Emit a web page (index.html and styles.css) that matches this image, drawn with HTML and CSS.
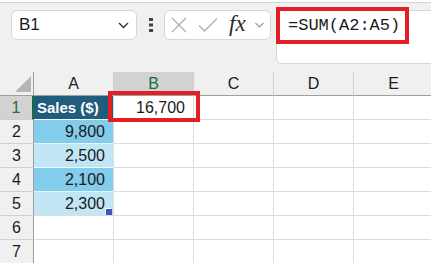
FILE: index.html
```html
<!DOCTYPE html>
<html lang="en">
<head>
    <meta charset="UTF-8">
    <title>Excel SUM</title>
    <link rel="stylesheet" href="styles.css">
</head>
<body>

<div class="top-strip"></div>

<div class="formula-row">
    <div class="name-box">
        <span>B1</span>
        <svg width="11" height="7" viewBox="0 0 11 7"><path d="M1 1 L5.5 5.5 L10 1" fill="none" stroke="#333" stroke-width="1.4"/></svg>
    </div>
    <div class="grip">
        <svg width="4" height="14" viewBox="0 0 4 14"><rect x="0" y="0" width="4" height="3" fill="#444"/><rect x="0" y="5.5" width="4" height="3" fill="#444"/><rect x="0" y="11" width="4" height="3" fill="#444"/></svg>
    </div>
    <div class="fx-box">
        <svg class="icon-x" width="16" height="16" viewBox="0 0 16 16"><path d="M1 1 L15 15 M15 1 L1 15" stroke="#b0b0b0" stroke-width="1.3"/></svg>
        <svg class="icon-check" width="20" height="16" viewBox="0 0 20 16"><path d="M1 8.5 L6.5 14 L19 1.5" fill="none" stroke="#b0b0b0" stroke-width="1.3"/></svg>
        <span class="fx">fx</span>
        <svg width="9" height="6" viewBox="0 0 9 6"><path d="M0.5 1 L4.5 5 L8.5 1" fill="none" stroke="#9a9a9a" stroke-width="1.2"/></svg>
    </div>
    <div class="formula-input">
        <span class="formula-text">=SUM(A2:A5)</span>
    </div>
</div>

<div class="sheet">
    <div class="hdr corner"></div>
    <div class="hdr col">A</div>
    <div class="hdr col selected">B</div>
    <div class="hdr col">C</div>
    <div class="hdr col">D</div>
    <div class="hdr col">E</div>

    <div class="hdr row selected">1</div>
    <div class="cell head">Sales ($)</div>
    <div class="cell num active">16,700<span class="mark"></span></div>
    <div class="cell"></div><div class="cell"></div><div class="cell"></div>

    <div class="hdr row">2</div>
    <div class="cell num dark">9,800</div>
    <div class="cell"></div><div class="cell"></div><div class="cell"></div><div class="cell"></div>

    <div class="hdr row">3</div>
    <div class="cell num light">2,500</div>
    <div class="cell"></div><div class="cell"></div><div class="cell"></div><div class="cell"></div>

    <div class="hdr row">4</div>
    <div class="cell num dark">2,100</div>
    <div class="cell"></div><div class="cell"></div><div class="cell"></div><div class="cell"></div>

    <div class="hdr row">5</div>
    <div class="cell num light last">2,300<span class="handle"></span></div>
    <div class="cell"></div><div class="cell"></div><div class="cell"></div><div class="cell"></div>

    <div class="hdr row">6</div>
    <div class="cell"></div><div class="cell"></div><div class="cell"></div><div class="cell"></div><div class="cell"></div>

    <div class="hdr row">7</div>
    <div class="cell"></div><div class="cell"></div><div class="cell"></div><div class="cell"></div><div class="cell"></div>
</div>

</body>
</html>
```

FILE: styles.css
```css
body {
    margin: 0;
    padding: 0;
    background: #f0f0f0;
    font-family: 'Liberation Sans', Arial, sans-serif;
    color: #1b1b1b;
    width: 431px;
    height: 263px;
    overflow: hidden;
}

.top-strip {
    height: 2px;
    background: #ffffff;
    border-bottom: 1px solid #d4d4d4;
}

.formula-row {
    display: flex;
    align-items: flex-start;
    height: 62px;
    padding: 7px 0 0 11px;
}

.name-box {
    box-sizing: border-box;
    width: 126px;
    height: 30px;
    background: #ffffff;
    border: 1px solid #d6d6d6;
    border-radius: 6px;
    display: flex;
    align-items: center;
    justify-content: space-between;
    padding: 0 7px 0 7px;
    font-size: 17px;
}

.grip {
    margin: 8px 11px 0 12px;
    height: 14px;
}

.grip svg {
    display: block;
}

.fx-box {
    box-sizing: border-box;
    width: 107px;
    height: 30px;
    background: #ffffff;
    border: 1px solid #d6d6d6;
    border-radius: 6px;
    display: flex;
    align-items: center;
    padding-left: 6px;
}

.icon-check {
    margin-left: 11px;
}

.fx {
    font-family: 'Liberation Serif', 'Times New Roman', serif;
    font-style: italic;
    font-size: 23px;
    color: #2b2b2b;
    margin: 0 9px 3px 11px;
}

.formula-input {
    box-sizing: border-box;
    flex: 1;
    height: 54px;
    margin: 0 -12px 0 5px;
    background: #ffffff;
    border: 1px solid #d6d6d6;
    border-radius: 6px;
}

.formula-text {
    display: inline-block;
    box-sizing: border-box;
    height: 37px;
    margin: -4px 0 0 -1px;
    padding-left: 8px;
    width: 133px;
    border: 4px solid #e41e26;
    font-family: 'Liberation Mono', 'Courier New', monospace;
    font-size: 17px;
    line-height: 29px;
    color: #1b1b1b;
}

.sheet {
    display: grid;
    grid-template-columns: 34px repeat(5, 80px);
    grid-auto-rows: 24px;
    background: #ffffff;
}

.hdr {
    box-sizing: border-box;
    background: #f0f0f0;
    color: #1b1b1b;
    font-size: 16px;
    display: flex;
    align-items: center;
    justify-content: center;
}

.hdr.col {
    border-right: 1px solid #d0d0d0;
    border-bottom: 1px solid #9f9f9f;
}

.hdr.corner {
    position: relative;
    border-right: 1px solid #9f9f9f;
    border-bottom: 1px solid #9f9f9f;
}

.hdr.corner::after {
    content: "";
    position: absolute;
    right: 2px;
    bottom: 3px;
    width: 16px;
    height: 16px;
    background: #b5b5b5;
    clip-path: polygon(100% 0, 100% 100%, 0 100%);
}

.hdr.row {
    border-right: 1px solid #9f9f9f;
    border-bottom: 1px solid #d0d0d0;
}

.hdr.selected {
    background: #d2d2d2;
    color: #1d6b3b;
}

.hdr.row.selected {
    border-right: 2px solid #1d6b3b;
}

.cell {
    box-sizing: border-box;
    border-right: 1px solid #dcdcdc;
    border-bottom: 1px solid #dcdcdc;
    font-size: 16px;
    display: flex;
    align-items: center;
}

.cell.num {
    justify-content: flex-end;
    padding-right: 8px;
}

.cell.head {
    background: #1f5c7d;
    color: #ffffff;
    font-weight: bold;
    font-size: 15px;
    padding-left: 3px;
    border-bottom-color: #ffffff;
}

.cell.dark {
    background: #83cceb;
    border-bottom-color: #e6f4fb;
}

.cell.light {
    background: #c0e6f5;
    border-bottom-color: #f2fafd;
}

.cell.last {
    position: relative;
    border-bottom-color: #dcdcdc;
}

.cell.active {
    position: relative;
}

.mark {
    position: absolute;
    left: -6px;
    top: -5px;
    width: 92px;
    height: 31px;
    box-sizing: border-box;
    border: 4px solid #e41e26;
}

.handle {
    position: absolute;
    right: 1px;
    bottom: 0;
    width: 6px;
    height: 6px;
    background: #3f55c0;
    box-shadow: -1px -1px 0 #ffffff;
}
```
